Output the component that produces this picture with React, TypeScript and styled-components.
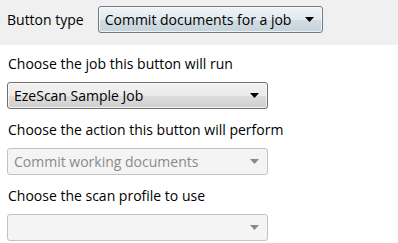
import React from 'react';
import styled, { createGlobalStyle } from 'styled-components';

const GlobalStyle = createGlobalStyle`
  html, body {
    margin: 0;
    padding: 0;
    background: #ffffff;
  }
  body {
    font-family: 'Open Sans', 'Noto Sans', sans-serif;
    font-size: 14px;
    color: #000000;
  }
`;

const Page = styled.div`
  width: 398px;
  height: 243px;
  display: flex;
  flex-direction: column;
  background: #ffffff;
  overflow: hidden;
`;

const TopBar = styled.div`
  flex-shrink: 0;
  height: 45px;
  box-sizing: border-box;
  display: flex;
  align-items: flex-start;
  padding: 6px 0 0 7px;
  gap: 14px;
  background: #f0f0f0;
`;

const TopLabel = styled.div`
  line-height: 27px;
  white-space: nowrap;
`;

const Content = styled.div`
  flex-shrink: 0;
  display: flex;
  flex-direction: column;
  gap: 10px;
  padding: 8px 0 0 7px;
`;

const Field = styled.div`
  display: flex;
  flex-direction: column;
  gap: 7px;
`;

const Label = styled.div`
  line-height: 22px;
  padding-left: 1px;
  white-space: nowrap;
`;

type Variant = 'hover' | 'normal' | 'disabled';

const SelectBox = styled.div<{ $variant: Variant; $width: number }>`
  box-sizing: border-box;
  width: ${({ $width }) => $width}px;
  height: 27px;
  display: flex;
  align-items: center;
  justify-content: space-between;
  padding: 0 8px 0 6px;
  border-radius: 3px;
  border: 1px solid
    ${({ $variant }) =>
      $variant === 'hover' ? '#6f7c86' : $variant === 'normal' ? '#707070' : '#c2c2c2'};
  color: ${({ $variant }) => ($variant === 'disabled' ? '#8a8a8a' : '#000000')};
  background: ${({ $variant }) =>
    $variant === 'hover'
      ? 'linear-gradient(#eef3f6 0%, #e2eaef 50%, #d2dde3 50%, #c5d3db 100%)'
      : $variant === 'normal'
      ? 'linear-gradient(#f2f2f2 0%, #ebebeb 50%, #dddddd 50%, #cfcfcf 100%)'
      : '#f4f4f4'};
  box-shadow: ${({ $variant }) =>
    $variant === 'disabled' ? 'none' : 'inset 0 0 0 1px rgba(255,255,255,0.7)'};
  white-space: nowrap;
`;

const Arrow = ({ color }: { color: string }) => (
  <svg width="9" height="5" viewBox="0 0 9 5">
    <path d="M0 0 H9 L4.5 5 Z" fill={color} />
  </svg>
);

interface SelectProps {
  value: string;
  variant: Variant;
  width: number;
}

const Select: React.FC<SelectProps> = ({ value, variant, width }) => (
  <SelectBox $variant={variant} $width={width}>
    <span>{value}</span>
    <Arrow color={variant === 'disabled' ? '#888888' : '#000000'} />
  </SelectBox>
);

export default function App() {
  return (
    <Page>
      <GlobalStyle />
      <TopBar>
        <TopLabel>Button type</TopLabel>
        <Select value="Commit documents for a job" variant="hover" width={225} />
      </TopBar>
      <Content>
        <Field>
          <Label>Choose the job this button will run</Label>
          <Select value="EzeScan Sample Job" variant="normal" width={261} />
        </Field>
        <Field>
          <Label>Choose the action this button will perform</Label>
          <Select value="Commit working documents" variant="disabled" width={261} />
        </Field>
        <Field>
          <Label>Choose the scan profile to use</Label>
          <Select value="" variant="disabled" width={261} />
        </Field>
      </Content>
    </Page>
  );
}
